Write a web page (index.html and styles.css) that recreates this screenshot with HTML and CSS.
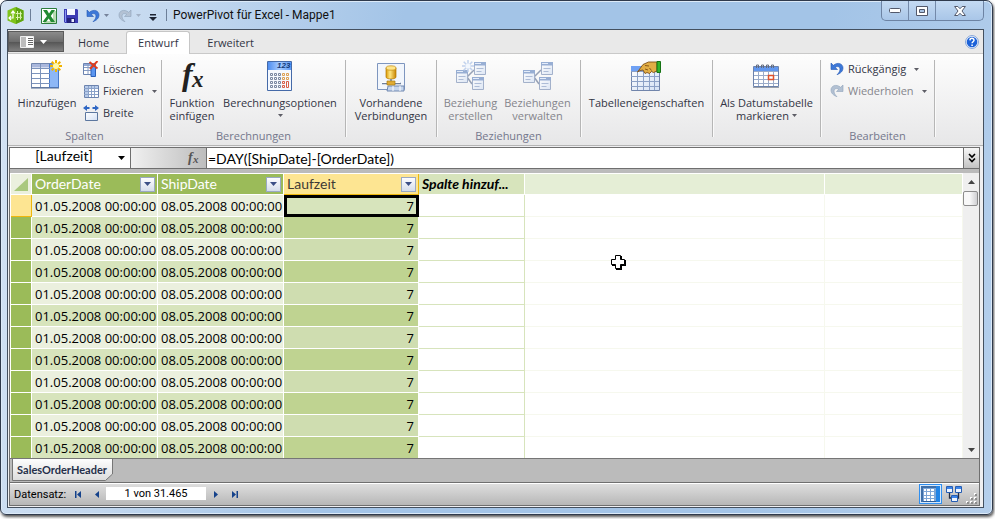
FILE: index.html
```html
<!DOCTYPE html>
<html lang="de">
<head>
<meta charset="utf-8">
<title>PowerPivot für Excel - Mappe1</title>
<link rel="stylesheet" href="styles.css">
</head>
<body>
<svg class="defs" width="0" height="0" aria-hidden="true">
  <defs>
    <linearGradient id="gPale" x1="0" y1="0" x2="1" y2="1"><stop offset="0" stop-color="#ffffff"/><stop offset="1" stop-color="#d3e0f4"/></linearGradient>
    <linearGradient id="gGold" x1="0" y1="0" x2="1" y2="0"><stop offset="0" stop-color="#d99a08"/><stop offset=".4" stop-color="#ffe680"/><stop offset="1" stop-color="#c88400"/></linearGradient>
    <linearGradient id="gHead" x1="0" y1="0" x2="1" y2="0"><stop offset="0" stop-color="#4f8ef0"/><stop offset=".5" stop-color="#a8ccff"/><stop offset="1" stop-color="#5d9af5"/></linearGradient>
    <symbol id="undo" viewBox="0 0 14 14"><path d="M1 1v6.500h6.500L5.200 5.400C8 3.600 10.400 5 9.900 8c-.2 1.600-1.200 3-2.900 4.700 3.800-1.300 6-3.700 6-6.700C13 1.500 7.500-.3 3.400 3.300z" fill="#3d78d8" stroke="#2458b4" stroke-width=".6"/></symbol>
    <symbol id="redo" viewBox="0 0 14 14"><path d="M13 1v6.500H6.500l2.300-2.100C6 3.600 3.600 5 4.100 8c.2 1.600 1.200 3 2.900 4.700C3.200 11.400 1 9 1 6 1 1.500 6.500-.3 10.600 3.300z" fill="#b3c1d3" stroke="#8fa2ba" stroke-width=".6"/></symbol>
    <symbol id="tri" viewBox="0 0 7 4"><path d="M0 0h7L3.500 4z" fill="currentColor"/></symbol>
    <symbol id="tbl" viewBox="0 0 12 13"><path d="M.5.5h11v12H.5z" fill="url(#gPale)" stroke="#8094b8"/><path d="M0 0h12v3.500H0z" fill="#6f8fc4"/><path d="M1 1h6v1H1z" fill="#dbe7fa"/><path d="M2.500 6.500h7M2.500 9.500h5" stroke="#8fa4ca"/></symbol>
  </defs>
</svg>
<div class="window">
  <header class="titlebar">
    <svg class="app-logo" width="17" height="17" viewBox="0 0 17 17"><path d="M8.500 0l8 3.500v10l-8 3.500-8-3.500v-10z" fill="#7fc31c"/><path d="M9 0l7.500 3.500v10L9 17z" fill="#5fa510"/><path d="M2 11h4V5M4 6.500L6 4l2 2.500M4 9l-2 2 2 2" fill="none" stroke="#fff" stroke-width="1.200"/><path d="M10.500 4v9M13.500 4.500v8M9 6.500l6 .3M9 10.500l6-.3" stroke="#dff5b5" stroke-width="1.100"/></svg>
    <span class="bar"></span>
    <svg class="qa-excel" width="16" height="16" viewBox="0 0 16 16"><path d="M.5.5h15v15H.5z" fill="#fff" stroke="#2b7d3a"/><path d="M12 3h3v12H3v-2h9z" fill="#b9dcb4"/><path d="M2 2h4l2 3.500L10.500 2H14L9.800 8l4.200 6h-4l-2.300-3.600L5 14H1.500L6 8z" fill="#218a32"/></svg>
    <svg class="qa-save" width="14" height="14" viewBox="0 0 14 14"><path d="M0 0h13l1 1v13H1l-1-1z" fill="#3c3cb4"/><path d="M3 0h8v6H3z" fill="#f5f8ff"/><path d="M3 9h8v5H3z" fill="#23237c"/><path d="M7.500 10h2.500v3H7.500z" fill="#e9edff"/><path d="M1 1h1v12H1z" fill="#8a9bf0"/></svg>
    <svg class="qa-undo" width="14" height="14"><use href="#undo"/></svg>
    <svg class="qa-tri" width="5" height="3"><use href="#tri"/></svg>
    <svg class="qa-redo" width="14" height="14"><use href="#redo"/></svg>
    <svg class="qa-tri faded" width="5" height="3"><use href="#tri"/></svg>
    <svg class="qa-more" width="8" height="7" viewBox="0 0 8 7"><path d="M1 0h6v1.500H1zM0 3h8L4 7z" fill="#1d2433"/></svg>
    <span class="bar"></span>
    <h1>PowerPivot für Excel - Mappe1</h1>
    <div class="controls">
      <button aria-label="Minimieren"><svg width="12" height="6" viewBox="0 0 12 6"><rect x=".5" y=".5" width="11" height="4" rx="1" fill="#fff" stroke="#53596b"/></svg></button>
      <button aria-label="Maximieren"><svg width="12" height="10" viewBox="0 0 12 10"><path d="M.5.5h11v9H.5z" fill="#fff" stroke="#53596b"/><path d="M3.500 3.500h5v3h-5z" fill="#a9c4e4" stroke="#53596b"/></svg></button>
      <button class="close" aria-label="Schließen"><svg width="12" height="10" viewBox="0 0 12 10"><path d="M.6.500h3.300L6 2.700 8.100.5h3.300L8 5l3.400 4.500H8.100L6 7.300 3.900 9.500H.6L4 5z" fill="#fff" stroke="#53596b"/></svg></button>
    </div>
  </header>

  <main class="client">
    <nav class="tabs">
      <button class="file" aria-label="Datei"><svg width="32" height="12" viewBox="0 0 32 12"><path d="M.5.500h13v11H.5z" fill="#fff" stroke="#eee"/><path d="M1 1h5v10H1z" fill="#bdbdbd"/><path d="M8 2.500h5M8 4.500h5M8 6.500h5M8 8.500h5" stroke="#666"/><path d="M20 4h7l-3.500 4z" fill="#fff"/></svg></button>
      <a href="#home" class="first">Home</a>
      <a href="#entwurf" class="active">Entwurf</a>
      <a href="#erweitert">Erweitert</a>
      <button class="help" aria-label="Hilfe"><svg width="14" height="14" viewBox="0 0 14 14"><circle cx="7" cy="7" r="6.400" fill="#fff" stroke="#7c9fd6"/><circle cx="7" cy="7" r="5.300" fill="#1c62d8"/><path d="M4.900 5.400C5 2.600 9.200 2.800 9 5.200 8.900 6.700 7.100 6.800 7.100 8.300M7.100 9.500v1.600" fill="none" stroke="#fff" stroke-width="1.500"/></svg></button>
    </nav>

    <section class="ribbon">
      <div class="group g-spalten">
        <div class="tools">
          <button class="big">
            <svg width="32" height="32" viewBox="0 0 32 32"><path d="M.5 3.500h27v24H.5z" fill="#fff" stroke="#7186ae"/><path d="M1 4h18v3.500H1z" fill="#a9b7dc"/><path d="M18.500 4h9v23.500h-9z" fill="#8db7f6" stroke="#4779ca"/><path d="M1 8.500h18M1 13.500h18M1 18.500h18M1 23.500h18M9.500 4v23" stroke="#7c93bb"/><path d="M0 28h28" stroke="#536a92"/><path d="M25 0v12M19 6h12M20.700 1.700l8.600 8.600M29.300 1.700l-8.600 8.600" stroke="#f1b400" stroke-width="2"/><circle cx="25" cy="6" r="3" fill="#fff9a8"/></svg>
            <span>Hinzufügen</span>
          </button>
          <div class="stack">
            <button class="small"><svg width="16" height="16" viewBox="0 0 16 16"><path d="M.5 2.500h12v11H.5z" fill="#fff" stroke="#6b83b0"/><path d="M1 3h8v2H1z" fill="#94a9d6"/><path d="M1 6.500h8M1 9.500h8M5 3v10" stroke="#879cc3"/><path d="M8 5h4.500v10.500H8z" fill="#5b96f0" stroke="#2c60b8"/><path d="M6.500 1l8 6.500M14.500 0L7 8" stroke="#e03c1c" stroke-width="1.900"/></svg><span>Löschen</span></button>
            <button class="small"><svg width="16" height="16" viewBox="0 0 16 16"><path d="M1.500 2.500h14v12h-14z" fill="#fff" stroke="#6c83ae"/><path d="M2 3h3.500v11H2zM2 3h13v2H2z" fill="#b7cbea"/><path d="M1 5.500h14M1 8.500h14M1 11.500h14M5.500 3v11M8.500 3v11M11.500 3v11" stroke="#8ba2c9"/></svg><span>Fixieren</span><svg class="drop" width="5" height="3"><use href="#tri"/></svg></button>
            <button class="small"><svg width="16" height="16" viewBox="0 0 16 16"><path d="M0 3l4-3v2h2.500v2H4v2zM16 3l-4-3v2H9.500v2H12v2z" fill="#2e66c4"/><path d="M2.500 7.500h12v8h-12z" fill="url(#gPale)" stroke="#5c779f"/></svg><span>Breite</span></button>
          </div>
        </div>
        <h2>Spalten</h2>
      </div>

      <div class="group g-berechnung">
        <div class="tools">
          <button class="big">
            <svg class="function" width="32" height="32" viewBox="0 0 32 32"><text x="6" y="25" class="fx-f">f</text><text x="16" y="27" class="fx-x">x</text></svg>
            <span class="left">Funktion<br>einfügen</span>
          </button>
          <button class="big">
            <svg width="32" height="32" viewBox="0 0 32 32"><path d="M3.500 1.500h24v29h-24z" fill="#f5f9ff" stroke="#456aa8"/><path d="M4 2h23v8H4z" fill="url(#gHead)"/><text x="13" y="8" class="digits">123</text><g fill="none" stroke="#7886a0"><path d="M6.500 13.500h2v2h-2zM10.500 13.500h2v2h-2zM14.500 13.500h2v2h-2zM6.500 17.500h2v2h-2zM10.500 17.500h2v2h-2zM14.500 17.500h2v2h-2zM6.500 21.500h2v2h-2zM10.500 21.500h2v2h-2zM14.500 21.500h2v2h-2zM6.500 25.500h2v2h-2zM10.500 25.500h2v2h-2zM14.500 25.500h2v2h-2z"/><path stroke="#dda052" d="M18.500 13.500h2v2h-2zM18.500 17.500h2v2h-2zM22.500 13.500h2v2h-2zM22.500 17.500h2v2h-2z"/><path stroke="#d95d45" d="M18.500 21.500h2v2h-2zM18.500 25.500h2v2h-2zM22.500 21.500h2v6h-2z"/></g></svg>
            <span>Berechnungsoptionen</span>
            <svg class="drop" width="5" height="3"><use href="#tri"/></svg>
          </button>
        </div>
        <h2>Berechnungen</h2>
      </div>

      <div class="group g-verbindung">
        <div class="tools">
          <button class="big">
            <svg width="32" height="32" viewBox="0 0 32 32"><path d="M2.500 3.500h27v26h-27z" fill="#f2f6fc" stroke="#7e96bf"/><path d="M13 26h16v5H12z" fill="#c6d6ed" stroke="#7088b0"/><path d="M18 26v5M25 26v5" stroke="#fff"/><path d="M11 8v9c0 2.700 10 2.700 10 0V8z" fill="url(#gGold)" stroke="#b57900" stroke-width=".7"/><ellipse cx="16" cy="8" rx="5" ry="2.200" fill="#ffe58a" stroke="#c28b10" stroke-width=".7"/><path d="M16 19v3M7 23.500h19" stroke="#6e7f9b" stroke-width="1.500"/><path d="M7 22.500h18" stroke="#fff"/><path d="M12 21h8v4h-8z" fill="#e1ac33" stroke="#ab7b12" stroke-width=".7"/></svg>
            <span>Vorhandene<br>Verbindungen</span>
          </button>
        </div>
      </div>

      <div class="group g-beziehung">
        <div class="tools">
          <button class="big" disabled>
            <svg width="32" height="32" viewBox="0 0 32 32"><g opacity=".7"><path d="M12 17l7-7M12 17l5 7" stroke="#6d7d9b" stroke-width="1.500"/><use href="#tbl" x="1" y="10" width="12" height="13"/><use href="#tbl" x="19" y="2" width="12" height="13"/><use href="#tbl" x="17" y="17" width="12" height="13"/><path d="M13 0v12M7 6h12M8.700 1.700l8.600 8.600M17.300 1.700l-8.600 8.600" stroke="#a9c1e8" stroke-width="1.500"/><circle cx="13" cy="6" r="2.500" fill="#f0f6ff"/></g></svg>
            <span>Beziehung<br>erstellen</span>
          </button>
          <button class="big" disabled>
            <svg width="32" height="32" viewBox="0 0 32 32"><g opacity=".7"><path d="M12 17l7-7M12 17l5 7" stroke="#6d7d9b" stroke-width="1.500"/><use href="#tbl" x="1" y="10" width="12" height="13"/><use href="#tbl" x="19" y="2" width="12" height="13"/><use href="#tbl" x="17" y="17" width="12" height="13"/></g></svg>
            <span>Beziehungen<br>verwalten</span>
          </button>
        </div>
        <h2>Beziehungen</h2>
      </div>

      <div class="group g-tabelle">
        <div class="tools">
          <button class="big">
            <svg width="32" height="32" viewBox="0 0 32 32"><path d="M1.500 6.500h28v24h-28z" fill="url(#gPale)" stroke="#7185ab"/><path d="M1 6h28v5H1z" fill="#6fa1f4"/><path d="M1 11.500h28M1 16.500h28M1 21.500h28M1 26.500h28M7.500 11v19M13.500 11v19M19.500 11v19M24.500 11v19" stroke="#8ba0c6"/><path d="M7.500 12L13 4.500 18.500 2H27v9l-3.500 1.500-2-1-2 2-2.500-1-2 1-2-3.500-3 .5z" fill="#e2ae45" stroke="#805014" stroke-width=".9"/><path d="M15 5.500l4 .5M15 9l3 1M19.500 8l2 2.500" stroke="#7e4e12" stroke-width=".9" fill="none"/><path d="M27 1.500h3.500v11H27z" fill="#32b52b" stroke="#167314"/></svg>
            <span>Tabelleneigenschaften</span>
          </button>
        </div>
      </div>

      <div class="group g-datum">
        <div class="tools">
          <button class="big">
            <svg width="32" height="32" viewBox="0 0 32 32"><path d="M3.500 6.500h25v20h-25z" fill="#fff" stroke="#6b82ad"/><path d="M4 7h24v4H4z" fill="#6197ef"/><path d="M4 11.500h24M4 15.500h24M4 19.500h24M4 23.500h24M8.500 11v15M13.500 11v15M18.500 11v15M23.500 11v15" stroke="#9aabc9"/><path d="M3 27.500h26" stroke="#9a9fa8"/><path d="M6.500 8V5h2v3M11.500 8V5h2v3M16.500 8V5h2v3M21.500 8V5h2v3" fill="none" stroke="#636b7e"/><path d="M18.500 15.500h5v4h-5z" fill="#fff" stroke="#e0512a" stroke-width="1.500"/></svg>
            <span>Als Datumstabelle<br>markieren <svg class="drop inline" width="5" height="3"><use href="#tri"/></svg></span>
          </button>
        </div>
      </div>

      <div class="group g-bearbeiten">
        <div class="tools">
          <div class="stack">
            <button class="small"><svg width="14" height="14"><use href="#undo"/></svg><span>Rückgängig</span><svg class="drop" width="5" height="3"><use href="#tri"/></svg></button>
            <button class="small" disabled><svg width="14" height="14"><use href="#redo"/></svg><span>Wiederholen</span><svg class="drop" width="5" height="3"><use href="#tri"/></svg></button>
          </div>
        </div>
        <h2>Bearbeiten</h2>
      </div>
    </section>

    <div class="panel">
      <div class="formula">
        <label class="namebox"><select aria-label="Spalte"><option>[Laufzeit]</option></select><svg width="7" height="4"><use href="#tri"/></svg></label>
        <label class="fx" for="formula"><svg width="16" height="16" viewBox="0 0 16 16" role="img" aria-label="Formel"><text x="3" y="12" class="fx-small">f</text><text x="8" y="13" class="fx-small-x">x</text></svg></label>
        <input id="formula" type="text" value="=DAY([ShipDate]-[OrderDate])">
        <button aria-label="Bearbeitungsleiste erweitern"><svg width="8" height="10" viewBox="0 0 8 10"><path d="M1 1l3 3 3-3M1 5.500l3 3 3-3" fill="none" stroke="#000" stroke-width="1.600"/></svg></button>
      </div>

      <div class="sheet">
        <div class="grid">
          <table>
            <colgroup><col class="c-row"><col class="c-date"><col class="c-date"><col class="c-calc"><col class="c-add"><col class="c-space"><col></colgroup>
            <thead>
              <tr>
                <th class="corner" aria-label="Alles auswählen"><svg width="14" height="13" viewBox="0 0 14 13"><path d="M14 0v13H0z" fill="#a9c87d"/></svg></th>
                <th class="name"><div>OrderDate<button class="filter" aria-label="OrderDate filtern"><svg width="7" height="4"><use href="#tri"/></svg></button></div></th>
                <th class="name"><div>ShipDate<button class="filter" aria-label="ShipDate filtern"><svg width="7" height="4"><use href="#tri"/></svg></button></div></th>
                <th class="name current"><div>Laufzeit<button class="filter" aria-label="Laufzeit filtern"><svg width="7" height="4"><use href="#tri"/></svg></button></div></th>
                <th class="add">Spalte hinzuf...</th>
                <th class="rest"></th><th class="rest"></th>
              </tr>
            </thead>
            <tbody>
              <tr><th class="current"></th><td>01.05.2008 00:00:00</td><td>08.05.2008 00:00:00</td><td class="calc selected">7</td><td class="new"></td><td class="void"></td><td class="void"></td></tr>
              <tr><th></th><td>01.05.2008 00:00:00</td><td>08.05.2008 00:00:00</td><td class="calc">7</td><td class="new"></td><td class="void"></td><td class="void"></td></tr>
              <tr><th></th><td>01.05.2008 00:00:00</td><td>08.05.2008 00:00:00</td><td class="calc">7</td><td class="new"></td><td class="void"></td><td class="void"></td></tr>
              <tr><th></th><td>01.05.2008 00:00:00</td><td>08.05.2008 00:00:00</td><td class="calc">7</td><td class="new"></td><td class="void"></td><td class="void"></td></tr>
              <tr><th></th><td>01.05.2008 00:00:00</td><td>08.05.2008 00:00:00</td><td class="calc">7</td><td class="new"></td><td class="void"></td><td class="void"></td></tr>
              <tr><th></th><td>01.05.2008 00:00:00</td><td>08.05.2008 00:00:00</td><td class="calc">7</td><td class="new"></td><td class="void"></td><td class="void"></td></tr>
              <tr><th></th><td>01.05.2008 00:00:00</td><td>08.05.2008 00:00:00</td><td class="calc">7</td><td class="new"></td><td class="void"></td><td class="void"></td></tr>
              <tr><th></th><td>01.05.2008 00:00:00</td><td>08.05.2008 00:00:00</td><td class="calc">7</td><td class="new"></td><td class="void"></td><td class="void"></td></tr>
              <tr><th></th><td>01.05.2008 00:00:00</td><td>08.05.2008 00:00:00</td><td class="calc">7</td><td class="new"></td><td class="void"></td><td class="void"></td></tr>
              <tr><th></th><td>01.05.2008 00:00:00</td><td>08.05.2008 00:00:00</td><td class="calc">7</td><td class="new"></td><td class="void"></td><td class="void"></td></tr>
              <tr><th></th><td>01.05.2008 00:00:00</td><td>08.05.2008 00:00:00</td><td class="calc">7</td><td class="new"></td><td class="void"></td><td class="void"></td></tr>
              <tr><th></th><td>01.05.2008 00:00:00</td><td>08.05.2008 00:00:00</td><td class="calc">7</td><td class="new"></td><td class="void"></td><td class="void"></td></tr>
            </tbody>
          </table>
          <svg class="pointer" width="16" height="16" viewBox="0 0 16 16"><path d="M6 2h6v4h4v6h-4v4H6v-4H2V6h4z" fill="#000"/><path d="M5.500 1.500h5v4h4v5h-4v4h-5v-4h-4v-5h4z" fill="#fff" stroke="#000"/></svg>
        </div>
        <div class="scroll">
          <button aria-label="Nach oben"><svg width="7" height="4" viewBox="0 0 7 4"><path d="M0 4h7L3.500 0z" fill="#444"/></svg></button>
          <div class="thumb"></div>
          <button class="down" aria-label="Nach unten"><svg width="7" height="4"><use href="#tri"/></svg></button>
        </div>
      </div>

      <div class="sheet-tabs">
        <button class="sheet-tab"><svg width="102" height="22" viewBox="0 0 102 22" preserveAspectRatio="none"><defs><linearGradient id="gTab" x1="0" y1="0" x2="0" y2="1"><stop offset="0" stop-color="#fff"/><stop offset="1" stop-color="#dcdcdc"/></linearGradient></defs><path d="M.5-1v22.500h93l7-6.500V-1" fill="url(#gTab)" stroke="#767676"/></svg><span>SalesOrderHeader</span></button>
      </div>

      <footer class="status">
        <label for="record">Datensatz:</label>
        <button aria-label="Erster Datensatz"><svg width="8" height="7" viewBox="0 0 8 7"><path d="M1 0h1.500v7H1zM7 0v7L3 3.500z" fill="#15428b"/></svg></button>
        <button aria-label="Vorheriger Datensatz"><svg width="8" height="7" viewBox="0 0 8 7"><path d="M6 0v7L2 3.500z" fill="#15428b"/></svg></button>
        <input id="record" type="text" value="1 von 31.465">
        <button aria-label="Nächster Datensatz"><svg width="8" height="7" viewBox="0 0 8 7"><path d="M2 0v7l4-3.500z" fill="#15428b"/></svg></button>
        <button aria-label="Letzter Datensatz"><svg width="8" height="7" viewBox="0 0 8 7"><path d="M1 0v7l4-3.500zM5.500 0H7v7H5.500z" fill="#15428b"/></svg></button>
        <div class="views">
          <button class="on" aria-label="Datensicht"><svg width="19" height="16" viewBox="0 0 19 16"><path d="M.5.500h18v15H.5z" fill="#7fa6d6" stroke="#2c5d98"/><path d="M0 0h15v2H0zM0 2h2v14H0z" fill="#3f6fa8"/><path d="M15 0h4v16h-4z" fill="#2284e6"/><path d="M3 3h2v2H3zM6 3h3v2H6zM10 3h3v2h-3zM3 6h2v3H3zM6 6h3v3H6zM10 6h3v3h-3zM3 10h2v2H3zM6 10h3v2H6zM10 10h3v2h-3zM3 13h2v2H3zM6 13h3v2H6zM10 13h3v2h-3z" fill="#fff"/></svg></button>
          <button aria-label="Diagrammsicht"><svg width="16" height="16" viewBox="0 0 16 16"><path d="M3.500 7v5h9V7" fill="none" stroke="#222c44" stroke-width="1.300"/><path d="M.5.500h6v6h-6zM9.500.5h6v6h-6zM5.500 9.500h6v6h-6z" fill="#eef5ff" stroke="#255db3"/><path d="M1 1h5v2H1zM10 1h5v2h-5zM6 10h5v2H6z" fill="#3c84e8"/></svg></button>
          <svg class="grip" width="11" height="11" viewBox="0 0 11 11"><path d="M8 0h2v2H8zM4 4h2v2H4zM8 4h2v2H8zM0 8h2v2H0zM4 8h2v2H4zM8 8h2v2H8z" fill="#fff"/><path d="M9 1h2v2H9zM5 5h2v2H5zM9 5h2v2H9zM1 9h2v2H1zM5 9h2v2H5zM9 9h2v2H9z" fill="#8e8e8e"/></svg>
        </div>
      </footer>
    </div>
  </main>
</div>
</body>
</html>
```
FILE: styles.css
```css
* { box-sizing: border-box; }
html { height: 100%; }
body {
  height: 100%;
  margin: 0;
  padding: 0 2px 4px 0;
  background: #fff;
  font-family: "Open Sans", "Noto Sans", sans-serif;
  font-size: 11px;
  color: #333545;
  overflow: hidden;
}
svg { display: block; flex: none; }
.defs { position: absolute; }
button, select, input { margin: 0; padding: 0; border: 0; background: none; color: inherit; font: inherit; }
a { color: inherit; text-decoration: none; }
h1, h2 { margin: 0; font-weight: 400; font-size: 11px; }

/* window frame */
.window {
  height: 100%;
  display: flex;
  flex-direction: column;
  padding: 0 8px 6px 6px;
  border: 1px solid #2f3a4c;
  border-radius: 7px 7px 6px 6px;
  background: linear-gradient(100deg, #d4e3f4 0, #c3d8ef 180px, #a3c4e7 400px, #a3c4e7 820px, #b5cfec 100%);
  box-shadow: inset 0 0 0 1px #dceaf8, 1px 2px 3px #555;
}
.titlebar { height: 28px; flex: none; display: flex; align-items: center; }
.titlebar svg { margin-top: 1px; }
.app-logo { margin-right: 6px; }
.bar { width: 1px; height: 12px; background: #6d7f98; }
.titlebar .qa-excel { margin-left: 10px; }
.qa-save { margin-left: 7px; }
.qa-undo { margin-left: 8px; }
.qa-tri { margin-left: 4px; color: #76839a; }
.qa-redo { margin-left: 9px; }
.faded { color: #a3b1c5; }
.qa-more { margin: 0 9px 0 8px; }
.titlebar .qa-more { margin-top: 4px; }
h1 { margin-left: 6px; color: #111; font-family: Roboto, "Open Sans", sans-serif; font-size: 12px; }
.controls {
  display: flex;
  align-self: flex-start;
  height: 20px;
  margin-left: auto;
  border: 1px solid #6d83a3;
  border-top: 0;
  border-radius: 0 0 5px 5px;
  background: linear-gradient(#c4daf2, #a9c6e8);
}
.controls button { width: 27px; display: flex; align-items: center; justify-content: center; border-right: 1px solid #7389a9; }
.controls .close { width: 47px; border-right: 0; }

.client { flex: 1; min-height: 0; display: flex; flex-direction: column; border: 1px solid #44505f; background: #efeff1; }

/* ribbon */
.tabs { height: 24px; flex: none; display: flex; background: #e9e9e9; border-bottom: 1px solid #c9c9c9; }
.tabs a { padding: 4px 17px 0; line-height: 18px; }
.tabs .first { padding-left: 14px; }
.tabs .active { height: 24px; margin-top: 1px; padding: 2px 11px 0; border: 1px solid #c6c6c6; border-bottom: 0; border-radius: 3px 3px 0 0; background: #fff; }
.file { width: 56px; margin: 1px 0; display: flex; align-items: center; justify-content: center; border: 1px solid #5c5c5c; background: linear-gradient(#8b8b8b, #6d6d6d 50%, #555 52%, #7f7f7f); }
.help { margin-left: auto; padding: 0 4px; }
.ribbon { height: 92px; flex: none; display: flex; background: linear-gradient(#fdfdfd, #e7e7e8); border-bottom: 1px solid #b4b4b4; }
.group { flex: none; display: flex; flex-direction: column; margin: 6px 0 8px; border-right: 1px solid #b6b6b6; box-shadow: 1px 0 #fafafa; }
.g-spalten { width: 154px; }
.g-berechnung { width: 184px; }
.g-verbindung { width: 91px; }
.g-beziehung { width: 144px; }
.g-tabelle { width: 132px; }
.g-datum { width: 108px; }
.g-bearbeiten { width: 114px; }
.tools { flex: 1; display: flex; justify-content: center; }
.g-spalten .tools, .g-bearbeiten .tools { justify-content: flex-start; padding-left: 9px; }
.g-berechnung .tools, .g-beziehung .tools { justify-content: flex-start; }
.big { display: flex; flex-direction: column; align-items: center; line-height: 13px; text-align: center; white-space: nowrap; }
.big > span { margin-top: 4px; }
.big > .left { text-align: left; }
.g-spalten .big, .g-berechnung .big:first-child { width: 60px; }
.g-berechnung .big:nth-child(2) { width: 116px; }
.g-beziehung .big { width: 67px; }
.g-spalten .stack { padding-left: 6px; }
.small { height: 22px; display: flex; align-items: center; gap: 4px; padding-bottom: 4px; line-height: 18px; }
.small .drop { margin-left: 4px; }
.drop { color: #5d5d66; }
.big > .drop { margin-top: 5px; }
.inline { display: inline-block; vertical-align: 3px; }
.group h2 { height: 12px; margin-bottom: -5px; line-height: 12px; text-align: center; color: #74778c; }
button:disabled { color: #85858c; }
.function { overflow: visible; }
.fx-f { font: italic bold 32px "Liberation Serif", serif; fill: #222; }
.fx-x { font: italic bold 23px "Liberation Serif", serif; fill: #222; }
.digits { font: italic bold 8px "Liberation Sans", sans-serif; fill: #173c78; }

/* formula bar */
.panel { flex: 1; min-height: 0; display: flex; flex-direction: column; margin: 1px 3px 1px 1px; border: 1px solid #6f6f6f; background: #bbb; }
.formula { height: 21px; flex: none; display: flex; border-bottom: 1px solid #6f6f6f; background: #fff; color: #000; font: 14px Lato, "Open Sans", sans-serif; }
.namebox { width: 121px; display: flex; align-items: center; padding-right: 5px; border-right: 1px solid #6f6f6f; }
.namebox select { flex: 1; align-self: flex-start; height: 16px; line-height: 16px; appearance: none; text-align-last: center; }
.fx { width: 76px; display: flex; align-items: center; justify-content: flex-end; padding-right: 5px; border-right: 1px solid #6f6f6f; background: linear-gradient(90deg, #f0f0f0, #bdbdbd); }
.fx-small { font: italic bold 14px "Liberation Serif", serif; fill: #555; }
.fx-small-x { font: italic bold 11px "Liberation Serif", serif; fill: #555; }
.formula input { flex: 1; min-width: 0; padding-left: 1px; }
.formula button { width: 16px; display: flex; align-items: center; justify-content: center; border-left: 1px solid #6f6f6f; background: linear-gradient(#f7f7f7, #c3c3c3); }

/* data grid */
.sheet { flex: 1; min-height: 0; display: flex; margin-top: 4px; background: #fff; }
.grid { position: relative; flex: 1; min-width: 0; overflow: hidden; padding: 1px 0 0 1px; }
table { width: 100%; table-layout: fixed; border-spacing: 0; color: #000; font: 13px "Open Sans", "Noto Sans", sans-serif; }
.c-row { width: 21px; }
.c-date { width: 126px; }
.c-calc { width: 135px; }
.c-add { width: 106px; }
.c-space { width: 300px; }
th, td { height: 22px; padding: 0 3px; border-right: 1px solid #fff; border-bottom: 1px solid #fff; line-height: 21px; white-space: nowrap; font-weight: 400; text-align: left; }
tbody th { background: #9bbb59; }
td { padding: 2px 1px 0 3px; line-height: 19px; background: #ebf0de; }
tr:nth-child(even) td { background: #d7e4bc; }
td.calc { padding-right: 4px; background: #cfddb0; text-align: right; }
tr:nth-child(even) td.calc { background: #bfd391; }
td.selected { background: #d7e4bc; outline: 3px solid #000; outline-offset: -3px; }
tbody tr td.new { background: #fff; border-color: #d7e4bc; }
tbody tr td.void { background: #fff; border-color: #f6f8ee; }
thead th { height: 21px; line-height: 20px; font-family: Lato, "Open Sans", sans-serif; font-size: 14px; }
th.corner { padding: 0 0 0 3px; background: #ebf0de; }
th.name { background: #9bbb59; color: #fff; }
th.name div { display: flex; align-items: center; justify-content: space-between; margin-right: -1px; }
.filter { width: 15px; height: 15px; display: flex; align-items: center; justify-content: center; border: 1px solid #9aa9c4; background: linear-gradient(#fdfdff, #d5ddeb); color: #3b4f86; }
th.name.current { background: #fde592; color: #3d3a35; border-color: #efb70c; }
tbody th.current { background: #fde592; border-color: #efb70c; }
th.add { background: #d7e4bc; font-weight: 700; font-style: italic; }
th.rest { background: #e5eed6; }
.pointer { position: absolute; left: 600px; top: 81px; }
.scroll { width: 16px; display: flex; flex-direction: column; background: #efefef; }
.scroll button { height: 17px; display: flex; align-items: center; justify-content: center; color: #444; }
.scroll .down { margin-top: auto; }
.thumb { height: 15px; margin: 1px 1px 0 0; border: 1px solid #8c8c8c; border-radius: 2px; background: linear-gradient(90deg, #f8f8f8 45%, #cfcfd2); }

/* sheet tabs and status bar */
.sheet-tabs { height: 24px; flex: none; border-top: 1px solid #767676; padding-left: 2px; }
.sheet-tab { display: grid; color: #26304a; font: bold 11px Lato, "Open Sans", sans-serif; }
.sheet-tab > * { grid-area: 1 / 1; }
.sheet-tab span { z-index: 1; padding-right: 2px; line-height: 22px; }
.status { height: 23px; flex: none; display: flex; align-items: center; border-top: 1px solid #6f6f6f; padding-left: 4px; background: linear-gradient(#fff 1px, #dedede 1px, #b7b7b7); color: #000; font: 11px Roboto, "Open Sans", sans-serif; }
.status label { width: 54px; padding-top: 1px; }
.status button { width: 19px; display: flex; justify-content: center; }
.status input { width: 100px; height: 13px; margin: 0 0 2px; background: #fff; text-align: center; }
.views { display: flex; align-items: center; margin-left: auto; gap: 4px; padding-right: 2px; }
.status .views button { width: auto; }
.status .views .on { width: 23px; height: 20px; align-items: center; border: 1px solid #2f8ff0; background: #d7e8fa; }
.grip { align-self: flex-end; }
```
